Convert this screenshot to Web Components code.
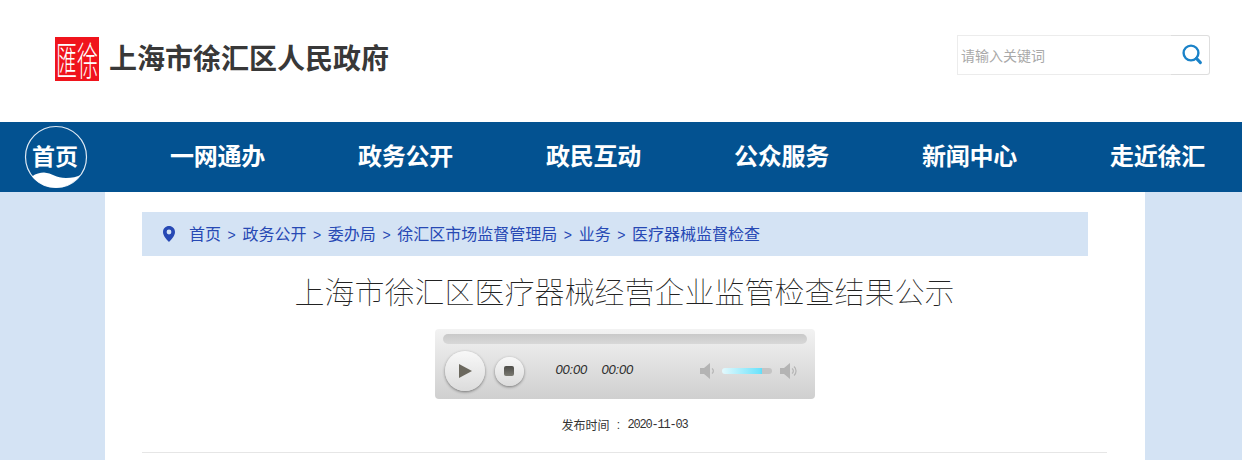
<!DOCTYPE html>
<html lang="zh-CN">
<head>
<meta charset="utf-8">
<title>上海市徐汇区人民政府</title>
<style>
  html, body { margin: 0; padding: 0; overflow: hidden; }
  body {
    height: 460px;
    background: #d4e3f4;
    font-family: "Noto Sans CJK SC", "Liberation Sans", sans-serif;
  }
</style>
</head>
<body>
<gov-page>
  <gov-header slot="header"></gov-header>
  <gov-nav slot="nav">
    <nav-item>一网通办</nav-item>
    <nav-item>政务公开</nav-item>
    <nav-item>政民互动</nav-item>
    <nav-item>公众服务</nav-item>
    <nav-item>新闻中心</nav-item>
    <nav-item>走近徐汇</nav-item>
  </gov-nav>
  <bread-crumb>
    <span>首页</span>
    <span>政务公开</span>
    <span>委办局</span>
    <span>徐汇区市场监督管理局</span>
    <span>业务</span>
    <span>医疗器械监督检查</span>
  </bread-crumb>
  <article-head date="2020-11-03">上海市徐汇区医疗器械经营企业监管检查结果公示</article-head>
</gov-page>

<script>
class GovPage extends HTMLElement {
  constructor() {
    super();
    this.attachShadow({ mode: "open" });
    this.shadowRoot.innerHTML = `
      <style>
        :host { display: block; }
        .main {
          width: 1040px;
          height: 268px;
          margin-left: 105px;
          padding: 20px 38px 0 37px;
          box-sizing: border-box;
          background: #fff;
        }
      </style>
      <slot name="header"></slot>
      <slot name="nav"></slot>
      <div class="main"><slot></slot></div>
    `;
  }
}

class GovSearch extends HTMLElement {
  constructor() {
    super();
    this.attachShadow({ mode: "open" });
    this.shadowRoot.innerHTML = `
      <style>
        :host { display: flex; width: 253px; height: 40px; margin-bottom: 8px; box-sizing: border-box; background: #fff; }
        .field {
          flex: 1;
          border: 1px solid #ececec;
          border-right: 0;
          padding-left: 3px;
          font-size: 14px;
          line-height: 39px;
          color: #a9a9a9;
        }
        button {
          width: 39px;
          padding: 0;
          display: flex;
          align-items: center;
          justify-content: center;
          background: #fff;
          border: 1px solid #dedede;
          border-left: 0;
          border-radius: 0 3px 3px 0;
        }
        svg { display: block; margin: 0 0 2px 4px; }
      </style>
      <div class="field">请输入关键词</div>
      <button aria-label="搜索">
        <svg width="22" height="22" viewBox="0 0 22 22" fill="none" stroke="#1a82c8">
          <circle cx="10" cy="10" r="7.4" stroke-width="2.4"/>
          <path d="M15.4 15.4 19.4 19.6" stroke-width="3" stroke-linecap="round"/>
        </svg>
      </button>
    `;
  }
}

class GovHeader extends HTMLElement {
  constructor() {
    super();
    this.attachShadow({ mode: "open" });
    this.shadowRoot.innerHTML = `
      <style>
        :host {
          display: flex;
          align-items: center;
          justify-content: space-between;
          height: 122px;
          padding: 0 32px 4px 55px;
          box-sizing: border-box;
          background: #fff;
        }
        .brand { display: flex; align-items: center; gap: 10px; }
        .seal {
          width: 44px;
          height: 44px;
          display: flex;
          flex-direction: row-reverse;
          align-items: center;
          justify-content: center;
          background: #f0141c;
          color: #fff;
        }
        .seal span {
          width: 21px;
          height: 21px;
          font-size: 21px;
          font-weight: 300;
          line-height: 21px;
          text-align: center;
          transform: scaleY(1.85);
        }
        h1 {
          margin: 0 0 5px;
          font-size: 28px;
          font-weight: 700;
          line-height: 44px;
          color: #383838;
        }
      </style>
      <div class="brand">
        <div class="seal"><span>徐</span><span>匯</span></div>
        <h1>上海市徐汇区人民政府</h1>
      </div>
      <gov-search></gov-search>
    `;
  }
}

class GovNav extends HTMLElement {
  constructor() {
    super();
    this.attachShadow({ mode: "open" });
    this.shadowRoot.innerHTML = `
      <style>
        :host {
          display: flex;
          align-items: center;
          height: 70px;
          padding-left: 24px;
          box-sizing: border-box;
          background: #035291;
        }
        .home { position: relative; width: 64px; height: 64px; margin: 0 82px 1px 0; }
        .home svg { display: block; }
        .home span {
          position: absolute;
          left: 0;
          right: 2px;
          top: 14px;
          font-size: 23px;
          font-weight: 700;
          line-height: 32px;
          text-align: center;
          color: #fff;
        }
        .items { display: flex; gap: 92px; }
      </style>
      <div class="home">
        <svg width="64" height="64" viewBox="0 0 64 64">
          <circle cx="32" cy="32" r="30.5" fill="none" stroke="#dfe9f3" stroke-width="1.2"/>
          <path d="M8 51.5C12 48.5 16 47.5 20 47.5C28 48 32 53 42 53C48 53 53 52 56.5 50A30.5 30.5 0 0 1 8 51.5Z" fill="#fff"/>
        </svg>
        <span>首页</span>
      </div>
      <div class="items"><slot></slot></div>
    `;
  }
}

class NavItem extends HTMLElement {
  constructor() {
    super();
    this.attachShadow({ mode: "open" });
    this.shadowRoot.innerHTML = `
      <style>
        :host {
          display: block;
          width: 96px;
          height: 70px;
          font-size: 24px;
          font-weight: 700;
          line-height: 66px;
          letter-spacing: -.25px;
          white-space: nowrap;
          color: #fff;
        }
      </style>
      <slot></slot>
    `;
  }
}

class BreadCrumb extends HTMLElement {
  constructor() {
    super();
    this.attachShadow({ mode: "open" });
    this.shadowRoot.innerHTML = `
      <style>
        :host {
          display: flex;
          align-items: center;
          width: 946px;
          height: 44px;
          padding-left: 21px;
          box-sizing: border-box;
          background: #d4e3f4;
          color: #2749b4;
          font-size: 16px;
        }
        svg { flex: none; margin-right: 14px; }
        .list { display: flex; margin-bottom: 2px; }
        ::slotted(span) { white-space: nowrap; }
        ::slotted(span:not(:last-child))::after {
          content: ">";
          display: inline-block;
          width: 21.4px;
          text-align: center;
          font-family: "Liberation Sans", sans-serif;
          font-size: 14px;
        }
      </style>
      <svg width="12" height="16" viewBox="0 0 12 16">
        <path fill-rule="evenodd" fill="#2749b4" d="M6 0C2.7 0 0 2.6 0 5.9C0 9.6 3.6 13.4 6 16C8.4 13.4 12 9.6 12 5.9C12 2.6 9.3 0 6 0ZM6 3.6A2.4 2.4 0 1 1 6 8.4A2.4 2.4 0 1 1 6 3.6Z"/>
      </svg>
      <div class="list"><slot></slot></div>
    `;
  }
}

class AudioPlayer extends HTMLElement {
  constructor() {
    super();
    this.attachShadow({ mode: "open" });
    const speaker = (waves) => `
      <svg width="18" height="16" viewBox="0 0 18 16">
        <path fill="#b4b4b4" d="M0 5H4L10 0V16L4 11H0Z"/>
        <path fill="none" stroke="#b4b4b4" stroke-width="1.2" d="${waves}"/>
      </svg>`;
    this.shadowRoot.innerHTML = `
      <style>
        :host {
          display: block;
          width: 380px;
          height: 70px;
          padding: 5px 8px 0;
          box-sizing: border-box;
          border-radius: 4px;
          background: linear-gradient(#f2f2f2, #cfcfcf);
        }
        .track {
          height: 10px;
          border-radius: 5px;
          background: linear-gradient(#c9c9c9, #d8d8d8);
        }
        .row { display: flex; align-items: center; height: 40px; margin: 7px 0 0 2px; }
        .btn {
          display: flex;
          align-items: center;
          justify-content: center;
          flex: none;
          border-radius: 50%;
          background: linear-gradient(#f8f8f8, #dcdcdc);
          box-shadow: 0 1px 3px rgba(0, 0, 0, .45);
        }
        .play { width: 40px; height: 40px; margin-right: 10px; }
        .play i {
          width: 0;
          height: 0;
          margin-left: 2px;
          border-left: 13px solid #6b685e;
          border-top: 7px solid transparent;
          border-bottom: 7px solid transparent;
        }
        .stop { width: 29px; height: 29px; margin-right: 32px; }
        .stop i {
          width: 10px;
          height: 10px;
          border-radius: 2px;
          background: linear-gradient(#4d4c48, #7b7a72);
        }
        .time {
          width: 32px;
          margin-bottom: 4px;
          font-family: "Liberation Sans", sans-serif;
          font-size: 13px;
          font-style: italic;
          letter-spacing: -.2px;
          color: #2a2a2a;
        }
        .time + .time { margin: 0 66px 4px 14px; }
        svg { flex: none; display: block; }
        .vol {
          width: 50px;
          height: 6px;
          margin: 0 8px 0 4px;
          border-radius: 3px;
          flex: none;
          background: linear-gradient(90deg, #e4f9fd 0, #6fe3fb 75%, #5fdcf8 80%, #c4c4c4 80%);
        }
      </style>
      <div class="track"></div>
      <div class="row">
        <div class="btn play"><i></i></div>
        <div class="btn stop"><i></i></div>
        <span class="time">00:00</span>
        <span class="time">00:00</span>
        ${speaker("M12 5.5A3 3 0 0 1 12 10.5")}
        <div class="vol"></div>
        ${speaker("M12 5.5A3 3 0 0 1 12 10.5M14 3.5A6 6 0 0 1 14 12.5")}
      </div>
    `;
  }
}

class ArticleHead extends HTMLElement {
  constructor() {
    super();
    this.attachShadow({ mode: "open" });
    this.shadowRoot.innerHTML = `
      <style>
        :host { display: block; height: 196px; border-bottom: 1px solid #e6e6e6; box-sizing: content-box; }
        h2 {
          margin: 0;
          padding-top: 14px;
          font-size: 30px;
          font-weight: 100;
          line-height: 41px;
          text-align: center;
          white-space: nowrap;
          color: #222;
        }
        audio-player { margin: 18px auto 0; }
        .meta {
          display: flex;
          justify-content: center;
          margin-top: 17px;
          font-size: 12px;
          line-height: 18px;
          color: #333;
        }
        .colon { width: 18px; text-align: center; font-family: "Liberation Sans", sans-serif; }
        .date { font-family: "Liberation Mono", monospace; letter-spacing: -1.2px; }
      </style>
      <h2><slot></slot></h2>
      <audio-player></audio-player>
      <div class="meta"><span>发布时间</span><span class="colon">:</span><span class="date"></span></div>
    `;
    this.shadowRoot.querySelector(".date").textContent = this.getAttribute("date");
  }
}

customElements.define("gov-page", GovPage);
customElements.define("gov-search", GovSearch);
customElements.define("gov-header", GovHeader);
customElements.define("gov-nav", GovNav);
customElements.define("nav-item", NavItem);
customElements.define("bread-crumb", BreadCrumb);
customElements.define("audio-player", AudioPlayer);
customElements.define("article-head", ArticleHead);
</script>
</body>
</html>
